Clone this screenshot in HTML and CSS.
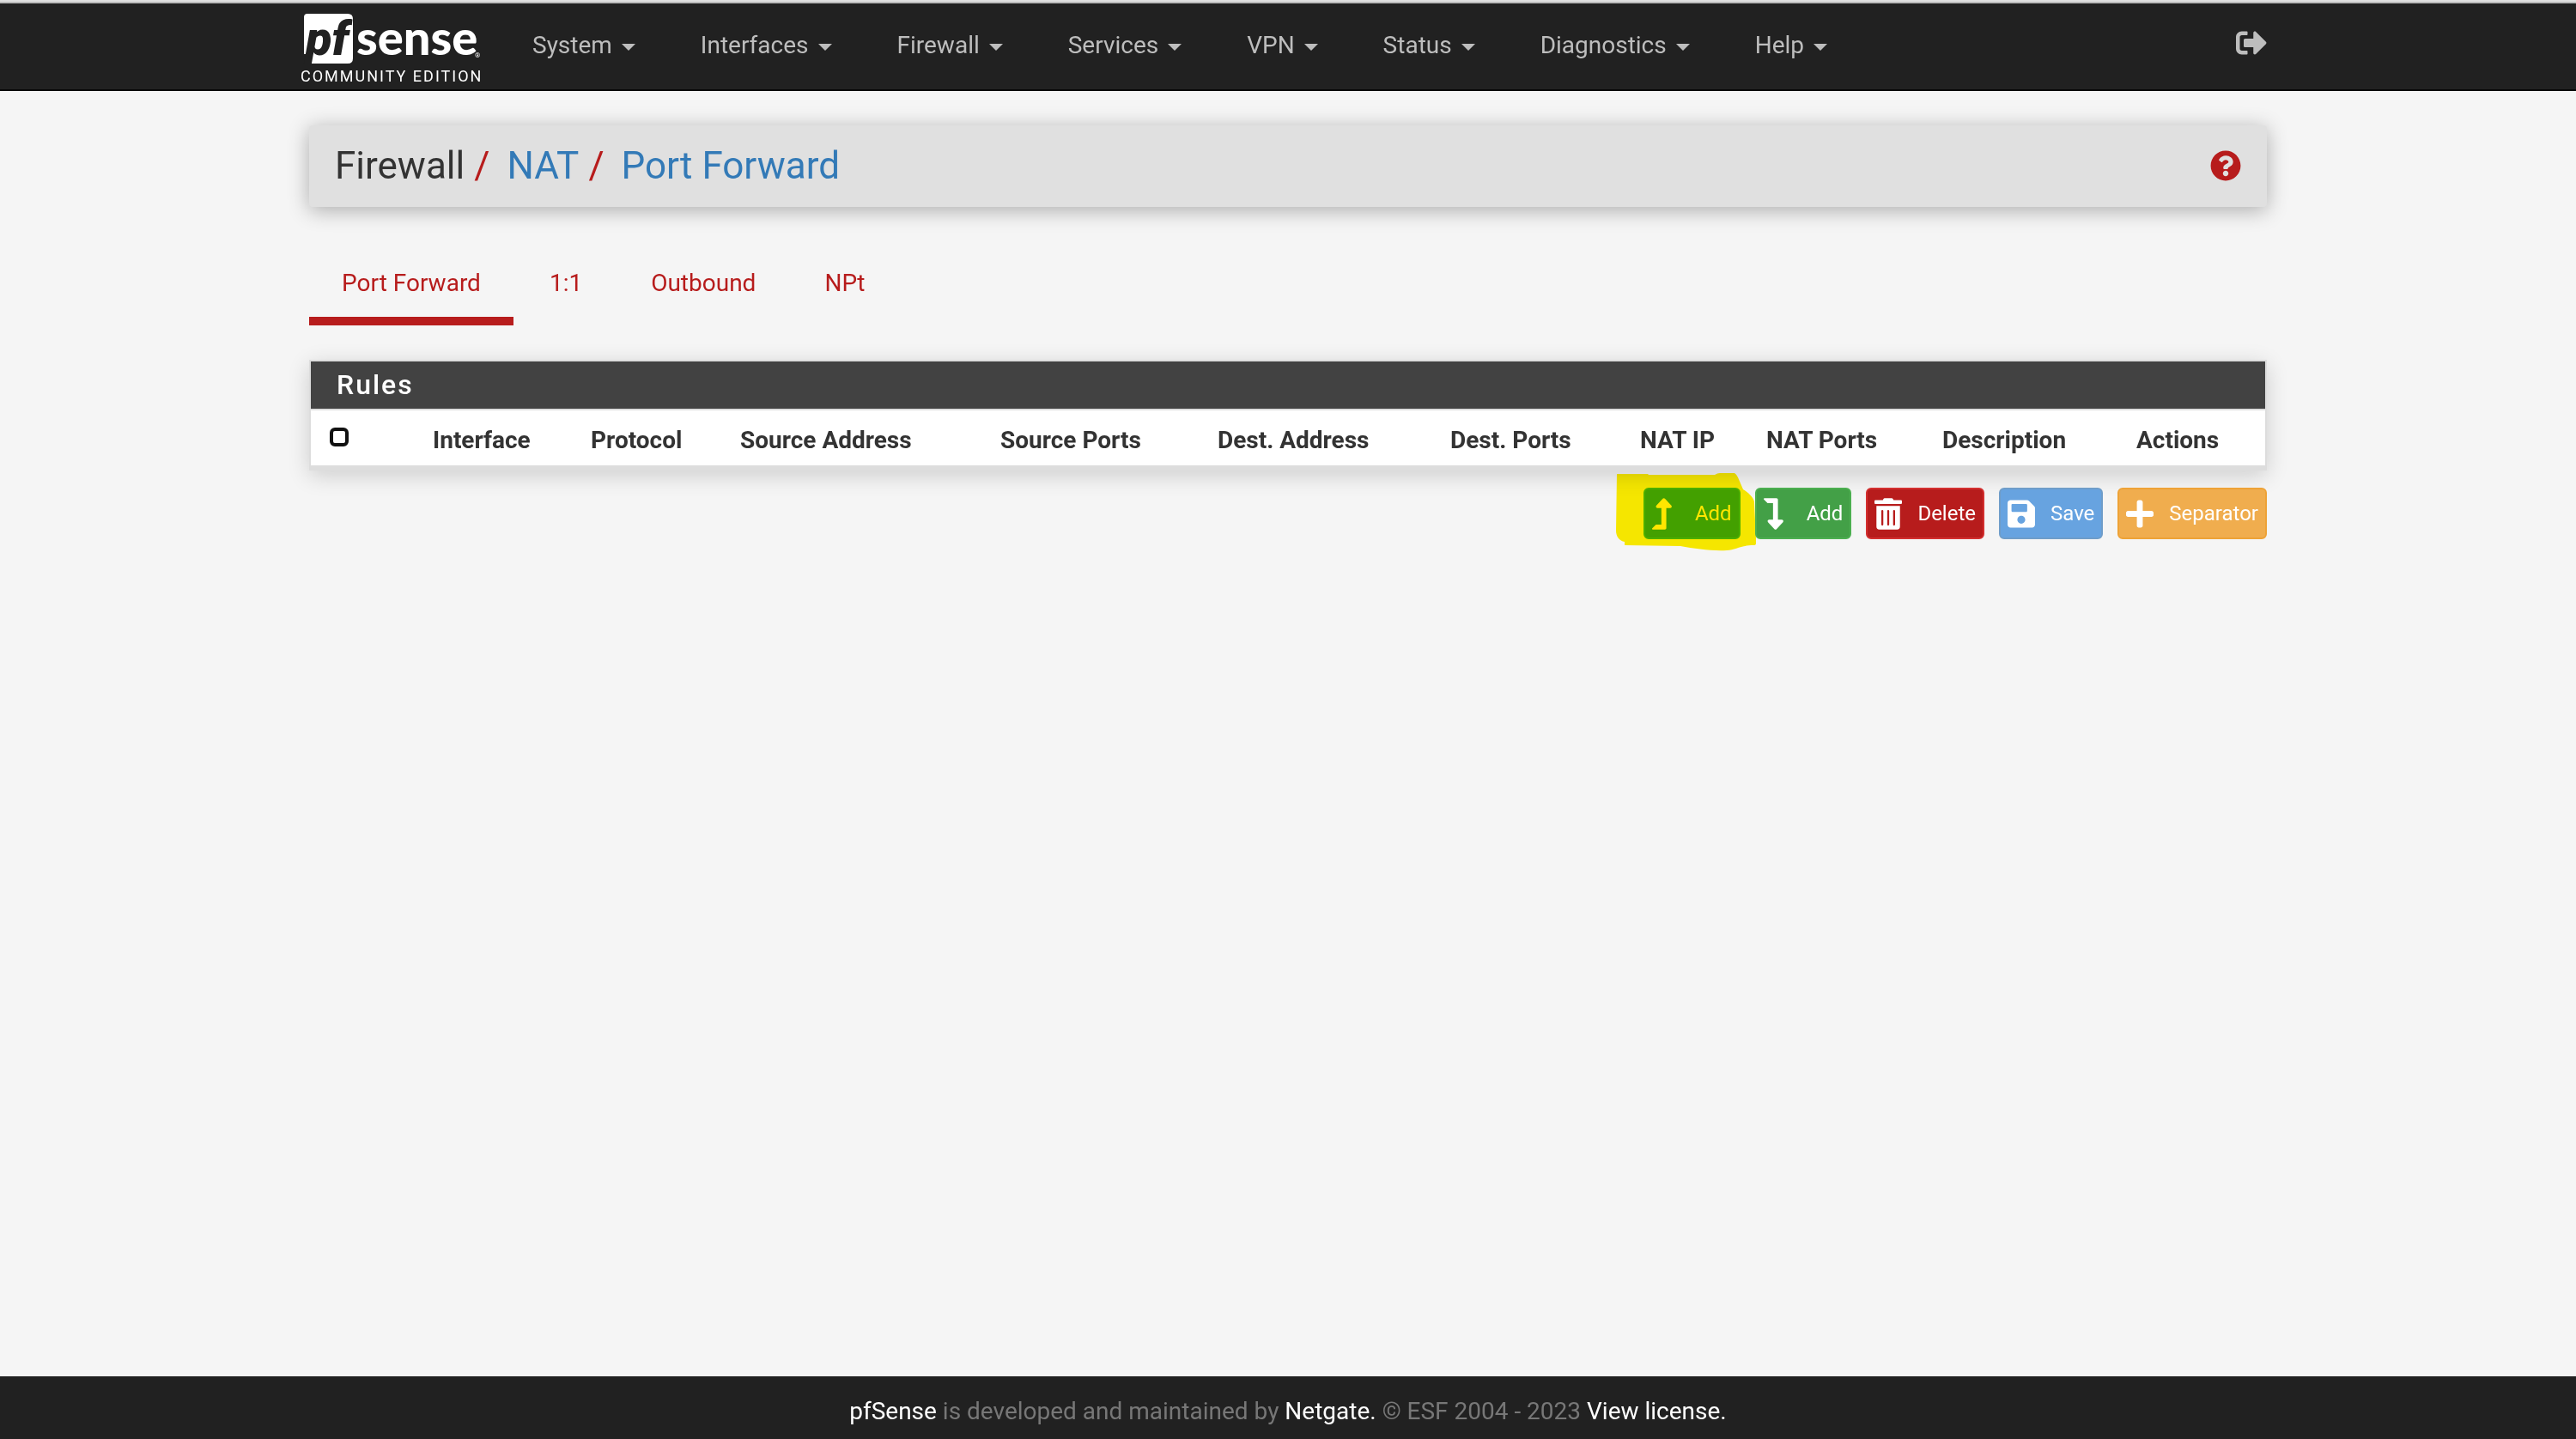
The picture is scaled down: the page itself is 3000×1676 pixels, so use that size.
FILE: index.html
```html
<!DOCTYPE html>
<html lang="en">
<head>
<meta charset="utf-8">
<meta name="viewport" content="width=device-width, initial-scale=1">
<title>pfSense - Firewall: NAT: Port Forward</title>
<link rel="stylesheet" href="styles.css">
</head>
<body>
<header class="topbar">
  <div class="container topbar-inner">
    <a class="brand" href="#">
      <svg class="brand-logo" viewBox="0 -12 212 80" role="img" aria-label="pfSense">
        <path class="brand-tile" d="M8 0H55Q61 0 61 6V52Q61 58 55 58H10L14 47H4V4Q4 0 8 0Z"/>
        <text class="brand-pf" x="6" y="48">pf</text>
        <text class="brand-sense" x="65" y="48">sense</text>
        <text class="brand-mark" x="203" y="51">®</text>
      </svg>
      <span class="brand-edition">COMMUNITY EDITION</span>
    </a>
    <nav class="menu" aria-label="Main">
      <a href="#">System <span class="caret"></span></a>
      <a href="#">Interfaces <span class="caret"></span></a>
      <a href="#">Firewall <span class="caret"></span></a>
      <a href="#">Services <span class="caret"></span></a>
      <a href="#">VPN <span class="caret"></span></a>
      <a href="#">Status <span class="caret"></span></a>
      <a href="#">Diagnostics <span class="caret"></span></a>
      <a href="#">Help <span class="caret"></span></a>
    </nav>
    <a class="logout" href="#" aria-label="Logout">
      <svg class="icon" viewBox="0 0 512 512"><path d="M497 273L329 441c-15 15-41 4.500-41-17v-96H152c-13.300 0-24-10.700-24-24v-96c0-13.300 10.700-24 24-24h136V88c0-21.400 25.900-32 41-17l168 168c9.300 9.400 9.300 24.600 0 34zM192 436v-40c0-6.600-5.400-12-12-12H96c-17.700 0-32-14.300-32-32V160c0-17.700 14.300-32 32-32h84c6.600 0 12-5.400 12-12V76c0-6.600-5.400-12-12-12H96c-53 0-96 43-96 96v192c0 53 43 96 96 96h84c6.600 0 12-5.400 12-12z"/></svg>
    </a>
  </div>
</header>

<main class="container content">
  <div class="page-title">
    <ol class="breadcrumb">
      <li>Firewall</li>
      <li><a href="#">NAT</a></li>
      <li><a href="#">Port Forward</a></li>
    </ol>
    <a class="help" href="#" aria-label="Help for this page">
      <svg class="icon" viewBox="0 0 512 512"><path d="M504 256c0 136.997-111.043 248-248 248S8 392.997 8 256C8 119.083 119.043 8 256 8s248 111.083 248 248zM262.655 90c-54.497 0-89.255 22.957-116.549 63.758-3.536 5.286-2.353 12.415 2.715 16.258l34.699 26.310c5.205 3.947 12.621 3.008 16.665-2.122 17.864-22.658 30.113-35.797 57.303-35.797 20.429 0 45.698 13.148 45.698 32.958 0 14.976-12.363 22.667-32.534 33.976C247.128 238.528 216 254.941 216 296v4c0 6.627 5.373 12 12 12h56c6.627 0 12-5.373 12-12v-1.333c0-28.462 83.186-29.647 83.186-106.667 0-58.002-60.165-102-116.531-102zM256 338c-25.365 0-46 20.635-46 46 0 25.364 20.635 46 46 46s46-20.636 46-46c0-25.365-20.635-46-46-46z"/></svg>
    </a>
  </div>

  <nav class="tabs" aria-label="NAT">
    <a class="tab tab-active" href="#" aria-current="page">Port Forward</a>
    <a class="tab" href="#">1:1</a>
    <a class="tab" href="#">Outbound</a>
    <a class="tab" href="#">NPt</a>
  </nav>

  <section class="panel">
    <h2 class="panel-title">Rules</h2>
    <table class="rules">
      <colgroup>
        <col class="col-check"><col class="col-interface"><col class="col-protocol"><col class="col-src-address"><col class="col-src-ports"><col class="col-dest-address"><col class="col-dest-ports"><col class="col-nat-ip"><col class="col-nat-ports"><col class="col-description"><col class="col-actions">
      </colgroup>
      <thead>
        <tr>
          <th class="check-cell"><input class="check" type="checkbox" aria-label="Select all rules"></th>
          <th>Interface</th>
          <th>Protocol</th>
          <th>Source Address</th>
          <th>Source Ports</th>
          <th>Dest. Address</th>
          <th>Dest. Ports</th>
          <th>NAT IP</th>
          <th>NAT Ports</th>
          <th>Description</th>
          <th>Actions</th>
        </tr>
      </thead>
    </table>
  </section>

  <div class="actions">
    <div class="marked">
      <button class="btn btn-add" type="button">
        <svg class="btn-icon" viewBox="0 0 448 512"><path d="M313.553 119.669L209.587 7.666c-9.485-10.214-25.676-10.229-35.174 0L70.438 119.669C56.232 134.969 67.062 160 88.025 160H152v272H68.024a11.996 11.996 0 0 0-8.485 3.515l-56 56C-4.021 499.074 1.333 512 12.024 512H208c13.255 0 24-10.745 24-24V160h63.966c20.878 0 31.851-24.969 17.587-40.331z"/></svg>Add
      </button>
      <svg class="marker" viewBox="1883 551 164 91"><path d="M1884 552H1920L1921 553H1998Q2001 551 2004 551H2021Q2023 552 2025 556L2031 570C2039 575 2044 581 2044 585L2046 627V633Q2046 635 2043 635C2030 635 2022 640 2012 641C1995 642 1975 639 1958 636L1893 635V631C1887 630 1883 625 1883 618Z"/></svg>
    </div>
    <button class="btn btn-add" type="button">
      <svg class="btn-icon" viewBox="0 0 448 512"><path d="M313.553 392.331L209.587 504.334c-9.485 10.214-25.676 10.229-35.174 0L70.438 392.331C56.232 377.031 67.062 352 88.025 352H152V80H68.024a11.996 11.996 0 0 1-8.485-3.515l-56-56C-4.021 12.926 1.333 0 12.024 0H208c13.255 0 24 10.745 24 24v328h63.966c20.878 0 31.851 24.969 17.587 40.331z"/></svg>Add
    </button>
    <button class="btn btn-delete" type="button">
      <svg class="btn-icon" viewBox="0 0 448 512"><path d="M32 464a48 48 0 0 0 48 48h288a48 48 0 0 0 48-48V128H32zm272-256a16 16 0 0 1 32 0v224a16 16 0 0 1-32 0zm-96 0a16 16 0 0 1 32 0v224a16 16 0 0 1-32 0zm-96 0a16 16 0 0 1 32 0v224a16 16 0 0 1-32 0zM432 32H312l-9.400-18.700A24 24 0 0 0 281.100 0H166.800a23.720 23.720 0 0 0-21.400 13.300L136 32H16A16 16 0 0 0 0 48v32a16 16 0 0 0 16 16h416a16 16 0 0 0 16-16V48a16 16 0 0 0-16-16z"/></svg>Delete
    </button>
    <button class="btn btn-save" type="button">
      <svg class="btn-icon" viewBox="0 0 448 512"><path d="M433.941 129.941l-83.882-83.882A48 48 0 0 0 316.118 32H48C21.490 32 0 53.490 0 80v352c0 26.510 21.490 48 48 48h352c26.510 0 48-21.490 48-48V163.882a48 48 0 0 0-14.059-33.941zM224 416c-35.346 0-64-28.654-64-64 0-35.346 28.654-64 64-64s64 28.654 64 64c0 35.346-28.654 64-64 64zm96-304.520V212c0 6.627-5.373 12-12 12H76c-6.627 0-12-5.373-12-12V108c0-6.627 5.373-12 12-12h228.520c3.183 0 6.235 1.264 8.485 3.515l3.480 3.480A11.996 11.996 0 0 1 320 111.480z"/></svg>Save
    </button>
    <button class="btn btn-separator" type="button">
      <svg class="btn-icon" viewBox="0 0 448 512"><path d="M416 208H272V64c0-17.670-14.330-32-32-32h-32c-17.670 0-32 14.330-32 32v144H32c-17.670 0-32 14.330-32 32v32c0 17.670 14.330 32 32 32h144v144c0 17.670 14.330 32 32 32h32c17.670 0 32-14.330 32-32V304h144c17.670 0 32-14.330 32-32v-32c0-17.670-14.330-32-32-32z"/></svg>Separator
    </button>
  </div>
</main>

<footer class="footer">
  <p><a href="#">pfSense</a> is developed and maintained by <a href="#">Netgate.</a> © ESF 2004 - 2023 <a href="#">View license.</a></p>
</footer>
</body>
</html>
```
FILE: styles.css
```css
* {
  box-sizing: border-box;
}

body {
  margin: 0;
  min-height: 100vh;
  display: flex;
  flex-direction: column;
  background: #f5f5f5;
  color: #333;
  font-family: Roboto, "Liberation Sans", sans-serif;
  font-size: 28px;
  line-height: 40px;
}

a {
  text-decoration: none;
}

.container {
  width: 100%;
  max-width: 2340px;
  margin: 0 auto;
  padding: 0 30px;
}

/* Top bar */

.topbar {
  background: #212121;
  border-bottom: 2px solid #080808;
}

.topbar::before {
  content: "";
  display: block;
  height: 2px;
  background: #e0e0e0;
  border-bottom: 2px solid #bbb;
}

.topbar-inner {
  display: flex;
  align-items: flex-start;
  height: 100px;
  padding-left: 20px;
}

.brand {
  display: flex;
  flex-direction: column;
  width: 212px;
  margin-right: 20px;
  color: #fff;
}

.brand-logo {
  display: block;
  width: 212px;
  height: 80px;
}

.brand-tile,
.brand-sense,
.brand-mark {
  fill: #fff;
}

.brand-pf,
.brand-sense {
  font-size: 56px;
  font-weight: 900;
}

.brand-pf {
  fill: #212121;
  font-style: italic;
}

.brand-sense {
  font-family: Lato, "Open Sans", sans-serif;
}

.brand-mark {
  font-size: 8px;
}

.brand-edition {
  margin-top: -7px;
  font-size: 18px;
  line-height: 24px;
  letter-spacing: 2px;
  white-space: nowrap;
}

.menu {
  display: flex;
}

.menu a {
  padding: 29px 38px 31px;
  color: #bdbdbd;
  white-space: nowrap;
}

.caret {
  display: inline-block;
  margin-left: 4px;
  vertical-align: middle;
  border-top: 8px solid;
  border-right: 8px solid transparent;
  border-left: 8px solid transparent;
}

.logout {
  display: flex;
  margin-left: auto;
  padding-top: 28px;
  color: #bdbdbd;
}

.icon {
  width: 36px;
  height: 36px;
  fill: currentColor;
}

/* Page title */

.content {
  flex: 1;
}

.page-title {
  display: flex;
  align-items: center;
  justify-content: space-between;
  margin-top: 40px;
  padding: 17px 30px 18px;
  border-radius: 4px;
  background: #e0e0e0;
  box-shadow: 0 4px 24px rgba(0, 0, 0, 0.3);
}

.breadcrumb {
  display: flex;
  margin: 0;
  padding: 0;
  list-style: none;
  font-size: 44px;
  line-height: 60px;
}

.breadcrumb li + li::before {
  content: "/";
  padding: 0 20px 0 11px;
  color: #b71c1c;
}

.breadcrumb a {
  color: #337ab7;
}

.help {
  display: flex;
  color: #b71c1c;
}

/* Tabs */

.tabs {
  display: flex;
  gap: 4px;
  margin-top: 40px;
}

.tab {
  padding: 29px 38px 19px;
  border-bottom: 10px solid transparent;
  color: #b71c1c;
}

.tab-active {
  border-bottom-color: #b71c1c;
}

/* Rules panel */

.panel {
  margin-top: 40px;
  border: 2px solid #ddd;
  border-bottom-width: 6px;
  background: #fff;
  box-shadow: 0 6px 24px rgba(0, 0, 0, 0.16);
}

.panel-title {
  margin: 0;
  padding: 7px 30px 8px;
  border-bottom: 2px solid #ddd;
  background: #424242;
  color: #fff;
  font-size: 32px;
  font-weight: 500;
  letter-spacing: 2px;
}

.rules {
  width: 100%;
  table-layout: fixed;
  border-collapse: collapse;
}

.rules th {
  padding: 15px 10px 9px;
  text-align: left;
  font-weight: 700;
  white-space: nowrap;
}

.col-check { width: 132px; }
.col-interface { width: 184px; }
.col-protocol { width: 174px; }
.col-src-address { width: 303px; }
.col-src-ports { width: 253px; }
.col-dest-address { width: 271px; }
.col-dest-ports { width: 221px; }
.col-nat-ip { width: 147px; }
.col-nat-ports { width: 205px; }
.col-description { width: 226px; }
.col-actions { width: 160px; }

.rules .check-cell {
  padding: 0 22px 2px;
  line-height: 0;
}

.check {
  appearance: none;
  width: 22px;
  height: 22px;
  margin: 0;
  border: 4px solid #111;
  border-radius: 6px;
  background: #fff;
}

/* Buttons under the panel */

.actions {
  display: flex;
  justify-content: flex-end;
  gap: 17px;
  margin-top: 20px;
}

.btn {
  display: flex;
  align-items: center;
  height: 60px;
  padding: 0 8px;
  border: 2px solid;
  border-radius: 6px;
  color: #fff;
  font: inherit;
  font-size: 24px;
  line-height: 36px;
}

.btn-icon {
  width: 32px;
  height: 37px;
  margin-right: 18px;
  fill: currentColor;
}

.btn-add {
  background: #43a047;
  border-color: #4caf50;
}

.btn-delete {
  background: #b71c1c;
  border-color: #d32f2f;
}

.btn-save {
  background: #67a3e0;
  border-color: #6f9dc9;
}

.btn-separator {
  background: #f0ad4e;
  border-color: #eea236;
}

/* Highlighter stroke over the first button */

.marked {
  position: relative;
}

.marker {
  position: absolute;
  top: -17px;
  left: -32px;
  width: 164px;
  height: 91px;
  fill: #fff000;
  mix-blend-mode: multiply;
  pointer-events: none;
}

.marked + .btn {
  position: relative;
}

.marked .btn {
  background: #43aa47;
  border-color: #4cba50;
  color: #fff5ff;
}

/* Footer */

.footer {
  padding: 21px 30px 12px;
  background: #212121;
  color: #777;
  text-align: center;
}

.footer p {
  margin: 0;
}

.footer a {
  color: #fff;
}
```
